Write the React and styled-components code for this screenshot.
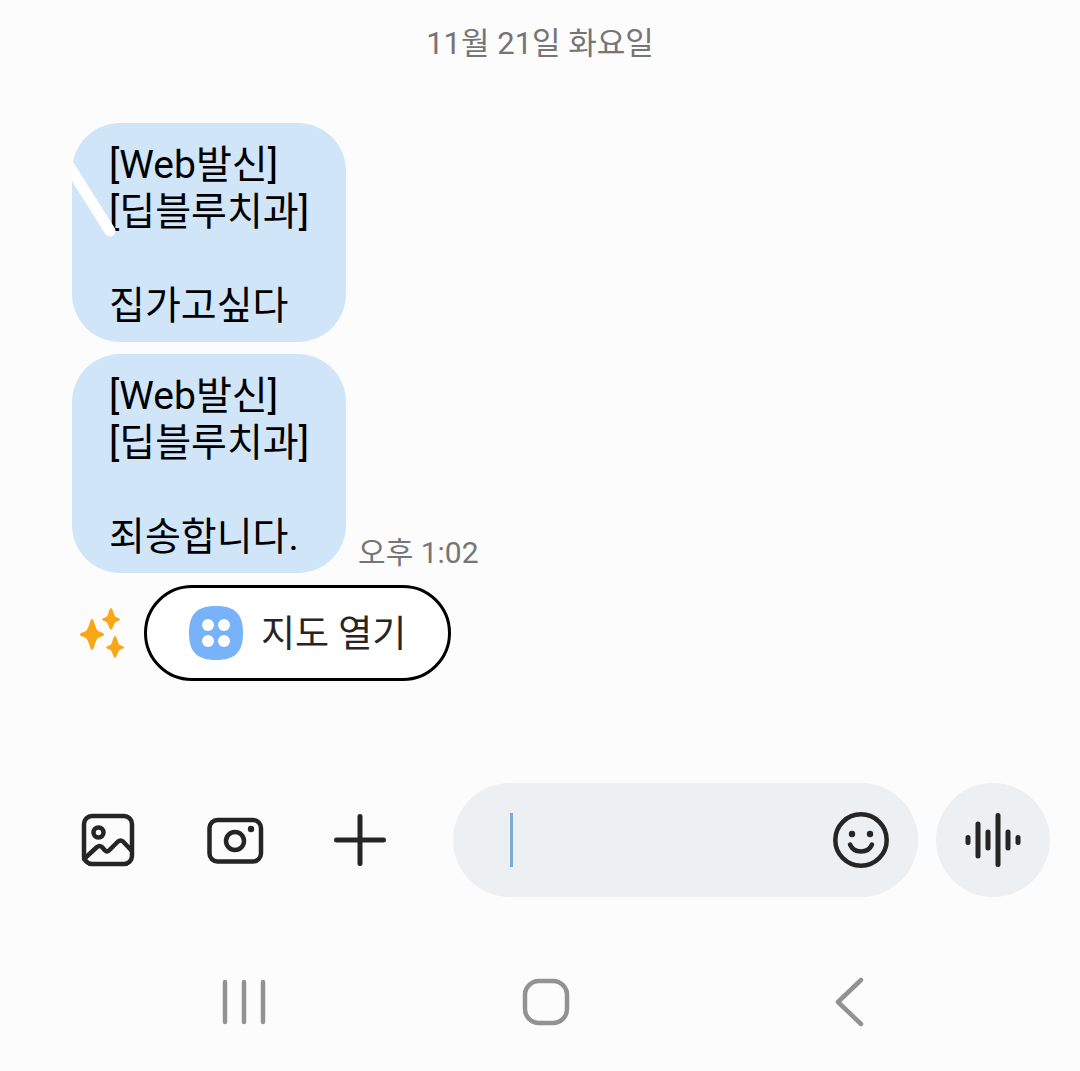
import React from "react";
import styled, { createGlobalStyle } from "styled-components";

const GlobalStyle = createGlobalStyle`
  *, *::before, *::after { box-sizing: border-box; }
  body {
    margin: 0;
    background: #fcfcfd;
    font-family: Roboto, "Noto Sans CJK KR", sans-serif;
  }
  button, input { font: inherit; color: inherit; }
  svg { display: block; }
`;

const Screen = styled.main`
  display: flex;
  flex-direction: column;
  min-height: 100vh;
`;

const DateLabel = styled.time`
  padding: 24px 0 59px;
  text-align: center;
  font-size: 31px;
  line-height: 40px;
  color: #757575;
`;

const Thread = styled.section`
  display: flex;
  flex-direction: column;
  gap: 12px;
  padding: 0 72px;
`;

const MessageRow = styled.article`
  display: flex;
  align-items: flex-end;
  gap: 12px;
`;

const Bubble = styled.p`
  position: relative;
  margin: 0;
  padding: 19px 37px 12px;
  border-radius: 48px;
  background: #d0e5f8;
  color: #000;
  font-size: 39px;
  line-height: 47px;
  white-space: pre-line;
`;

const PenStroke = styled.svg`
  position: absolute;
  top: 0;
  left: 0;
`;

const SentAt = styled.time`
  font-size: 30px;
  line-height: 40px;
  color: #757575;
`;

const SuggestionRow = styled.div`
  display: flex;
  align-items: center;
  gap: 16px;
  padding-left: 4px;
`;

const MapButton = styled.button`
  display: flex;
  align-items: center;
  gap: 18px;
  height: 96px;
  padding: 0 42px;
  border: 3px solid #000;
  border-radius: 48px;
  background: #fff;
  color: #252525;
  font-size: 37px;
  line-height: 48px;
  cursor: pointer;
`;

const ButtonText = styled.span`
  padding-top: 4px;
`;

const Composer = styled.form`
  display: flex;
  align-items: center;
  gap: 18px;
  padding: 102px 30px 72px 80px;
`;

const Tools = styled.div`
  display: flex;
  gap: 70px;
  margin-right: 47px;
`;

const IconButton = styled.button`
  display: grid;
  place-items: center;
  flex: none;
  width: ${(p) => p.$size}px;
  height: ${(p) => p.$size}px;
  padding: 0;
  border: 0;
  border-radius: 50%;
  background: ${(p) => (p.$filled ? "#edf0f3" : "none")};
  color: #252525;
  cursor: pointer;
`;

const Field = styled.label`
  display: flex;
  align-items: center;
  flex: 1;
  min-width: 0;
  height: 114px;
  padding: 0 29px 0 57px;
  border-radius: 57px;
  background: #edf0f3;
`;

const Caret = styled.span`
  flex: none;
  width: 3px;
  height: 54px;
  background: #7eabd4;
`;

const TextInput = styled.input`
  flex: 1;
  min-width: 0;
  height: 54px;
  padding: 0;
  border: 0;
  outline: 0;
  background: none;
  font-size: 39px;
  caret-color: transparent;
`;

const NavBar = styled.nav`
  display: grid;
  grid-template-columns: repeat(3, 1fr);
  justify-items: center;
  padding: 5px 80px 0 93px;
`;

const NavButton = styled(IconButton)`
  color: #929292;
`;

const Drawing = styled.svg`
  overflow: visible;
`;

const Icon = ({ size = 56, width = 4.5, children }) => (
  <Drawing
    width={size}
    height={size}
    viewBox={`0 0 ${size} ${size}`}
    fill="none"
    stroke="currentColor"
    strokeWidth={width}
    strokeLinecap="round"
    strokeLinejoin="round"
    aria-hidden="true"
  >
    {children}
  </Drawing>
);

const Sparkles = () => (
  <svg width="52" height="56" viewBox="0 0 52 56" fill="#fba614" aria-hidden="true">
    <path d="M16 14Q17 14 18 17Q20 24 22 26Q24 27 27 28Q28 29 28 29.500Q28 30 27 31Q24 32 22 33Q20 35 18 42Q17 45 16 45Q15 45 14 42Q12 35 10 33Q8 32 5 31Q4 30 4 29.500Q4 29 5 28Q8 27 10 26Q12 24 14 17Q15 14 16 14Z" />
    <path d="M35 3Q36 3 37 6Q38 10 39 11.500Q41 12.500 43 13.500Q44 14 44 14.500Q44 15 43 15.500Q41 16 39 17.500Q38 19 37 22Q36 25 35 25Q34 25 33 22Q32 19 31 17.500Q29 16 27 15.500Q26 15 26 14.500Q26 14 27 13.500Q29 12.500 31 11.500Q32 10 33 6Q34 3 35 3Z" />
    <path d="M39 31Q40 31 41 34Q42 38 43 39.500Q45 40.500 47 41.500Q48 42 48 42.500Q48 43 47 43.500Q45 44 43 45.500Q42 47 41 50Q40 53 39 53Q38 53 37 50Q36 47 35 45.500Q33 44 31 43.500Q30 43 30 42.500Q30 42 31 41.500Q33 40.500 35 39.500Q36 38 37 34Q38 31 39 31Z" />
  </svg>
);

const AppsBadge = () => (
  <svg width="54" height="54" viewBox="0 0 54 54" aria-hidden="true">
    <path
      fill="#78b2fb"
      d="M27 0C46 0 54 8 54 27S46 54 27 54S0 46 0 27S8 0 27 0Z"
    />
    <g fill="#fff">
      <circle cx="19" cy="19" r="6" />
      <circle cx="35" cy="19" r="6" />
      <circle cx="19" cy="35" r="6" />
      <circle cx="35" cy="35" r="6" />
    </g>
  </svg>
);

export default function App() {
  return (
    <>
      <GlobalStyle />
      <Screen>
        <DateLabel>11월 21일 화요일</DateLabel>

        <Thread>
          <MessageRow>
            <Bubble>
              {"[Web발신]\n[딥블루치과]\n\n집가고싶다"}
              <PenStroke width="60" height="120" viewBox="0 0 60 120" aria-hidden="true">
                <path d="M-3 43L38 108" stroke="#fff" strokeWidth="11" strokeLinecap="round" />
              </PenStroke>
            </Bubble>
          </MessageRow>
          <MessageRow>
            <Bubble>{"[Web발신]\n[딥블루치과]\n\n죄송합니다."}</Bubble>
            <SentAt>오후 1:02</SentAt>
          </MessageRow>
          <SuggestionRow>
            <Sparkles />
            <MapButton type="button">
              <AppsBadge />
              <ButtonText>지도 열기</ButtonText>
            </MapButton>
          </SuggestionRow>
        </Thread>

        <Composer onSubmit={(e) => e.preventDefault()}>
          <Tools>
            <IconButton type="button" $size={56} aria-label="갤러리">
              <Icon>
                <rect x="4" y="4" width="48" height="48" rx="8" />
                <circle cx="18.500" cy="20.500" r="5" />
                <path d="M4 47L17 35Q19.500 33 22 35L25 38.500Q27 40.500 29 38.500L38 29.500Q40.500 27.500 43 29.500L51 38" />
              </Icon>
            </IconButton>
            <IconButton type="button" $size={56} aria-label="카메라">
              <Icon>
                <rect x="3.500" y="8" width="51.500" height="41.500" rx="8" />
                <circle cx="29" cy="29" r="9" />
                <circle cx="45" cy="17" r="3.200" fill="currentColor" stroke="none" />
              </Icon>
            </IconButton>
            <IconButton type="button" $size={56} aria-label="추가">
              <Icon width={5}>
                <path d="M4.500 28H51.500M28 4.500V51.500" />
              </Icon>
            </IconButton>
          </Tools>
          <Field>
            <Caret />
            <TextInput type="text" aria-label="메시지 입력" />
            <IconButton type="button" $size={56} aria-label="이모티콘">
              <Icon>
                <circle cx="28" cy="28" r="25.700" />
                <path d="M17 32.500Q20 39.500 28 39.500T39 32.500" />
                <circle cx="19" cy="22" r="3.200" fill="currentColor" stroke="none" />
                <circle cx="37" cy="22" r="3.200" fill="currentColor" stroke="none" />
              </Icon>
            </IconButton>
          </Field>
          <IconButton type="button" $size={114} $filled aria-label="음성 메시지">
            <Icon size={58} width={5}>
              <path d="M4 26.500V31.500M14 13V45M24 21V37M34 4.500V53.500M44 21V37M54 26.500V31.500" />
            </Icon>
          </IconButton>
        </Composer>

        <NavBar>
          <NavButton type="button" $size={56} aria-label="최근 앱">
            <Icon>
              <path d="M9 8V48M28 8V48M47 8V48" />
            </Icon>
          </NavButton>
          <NavButton type="button" $size={56} aria-label="홈">
            <Icon>
              <rect x="7" y="7" width="42" height="42" rx="14" />
            </Icon>
          </NavButton>
          <NavButton type="button" $size={56} aria-label="뒤로">
            <Icon>
              <path d="M40 6L17 28L40 50" />
            </Icon>
          </NavButton>
        </NavBar>
      </Screen>
    </>
  );
}
